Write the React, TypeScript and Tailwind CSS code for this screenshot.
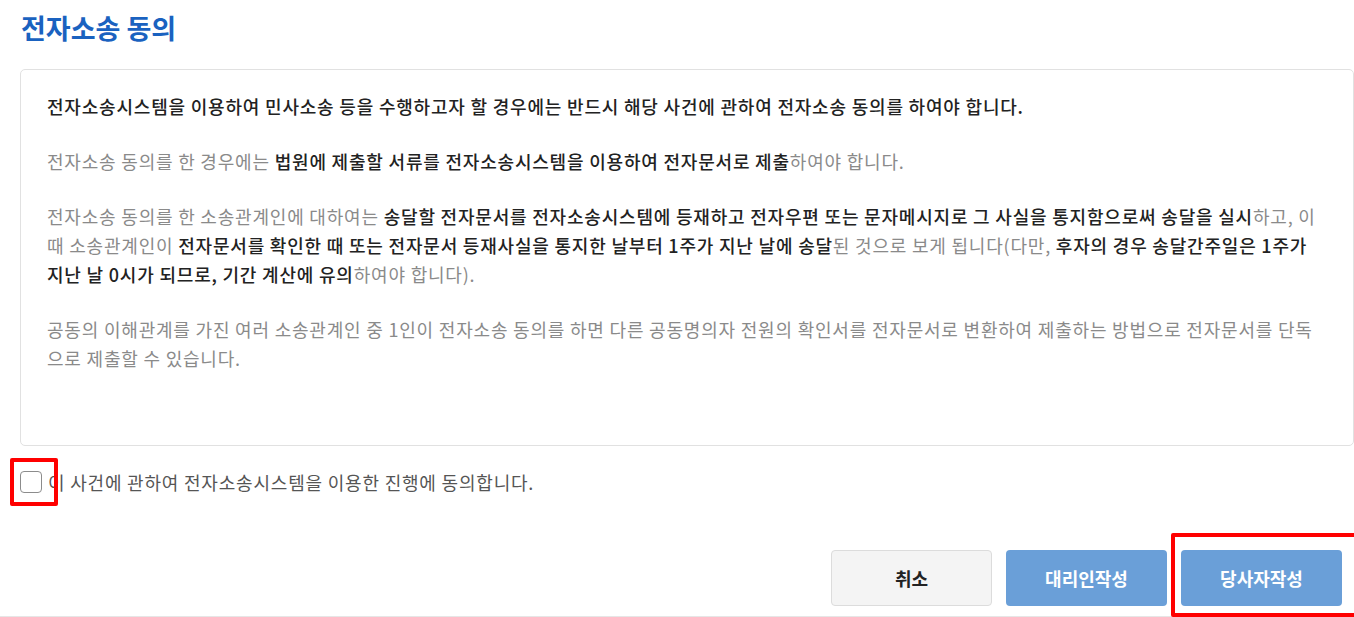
import React, { useState } from "react";

const B = ({ children }: { children: React.ReactNode }) => (
  <span className="text-[#222] font-medium">{children}</span>
);

export default function App() {
  const [agreed, setAgreed] = useState(false);

  return (
    <div className="w-[1354px] h-[617px] bg-white overflow-hidden font-['Noto_Sans_CJK_KR',sans-serif]">
      {/* Title */}
      <h2 className="pl-[21px] pt-[11px] text-[27px] leading-[34px] font-bold text-[#1a62c0]">
        전자소송 동의
      </h2>

      {/* Notice box */}
      <div className="ml-[20px] mt-[24px] h-[377px] border border-[#e1e1e1] rounded-[5px] pl-[26px] pr-[26px] pt-[22px] text-[18px] leading-[29px] tracking-[0.8px] text-[#8a8a8a]">
        <p>
          <B>
            전자소송시스템을 이용하여 민사소송 등을 수행하고자 할 경우에는 반드시 해당 사건에 관하여 전자소송 동의를 하여야
            합니다.
          </B>
        </p>
        <p className="mt-[26px]">
          전자소송 동의를 한 경우에는 <B>법원에 제출할 서류를 전자소송시스템을 이용하여 전자문서로 제출</B>하여야 합니다.
        </p>
        <p className="mt-[26px]">
          전자소송 동의를 한 소송관계인에 대하여는{" "}
          <B>송달할 전자문서를 전자소송시스템에 등재하고 전자우편 또는 문자메시지로 그 사실을 통지함으로써 송달을 실시</B>
          하고, 이 때 소송관계인이{" "}
          <B>전자문서를 확인한 때 또는 전자문서 등재사실을 통지한 날부터 1주가 지난 날에 송달</B>된 것으로 보게
          됩니다(다만, <B>후자의 경우 송달간주일은 1주가 지난 날 0시가 되므로, 기간 계산에 유의</B>하여야 합니다).
        </p>
        <p className="mt-[26px]">
          공동의 이해관계를 가진 여러 소송관계인 중 1인이 전자소송 동의를 하면 다른 공동명의자 전원의 확인서를
          전자문서로 변환하여 제출하는 방법으로 전자문서를 단독으로 제출할 수 있습니다.
        </p>
      </div>

      {/* Agreement checkbox */}
      <label className="mt-[24px] ml-[20px] flex items-center gap-[6px] h-[24px] cursor-pointer">
        <span className="relative flex">
          <input
            type="checkbox"
            checked={agreed}
            onChange={() => setAgreed(!agreed)}
            className="appearance-none w-[22px] h-[22px] border-[1.5px] border-[#8c8c8c] rounded-[4px] bg-white checked:bg-[#6a9fd8] checked:border-[#6a9fd8]"
          />
          <span className="pointer-events-none absolute -left-[10px] -top-[13px] w-[48px] h-[48px] border-[4px] border-[#ff0000] rounded-[2px]" />
        </span>
        <span className="text-[18px] tracking-[0.8px] text-[#555]">
          이 사건에 관하여 전자소송시스템을 이용한 진행에 동의합니다.
        </span>
      </label>

      {/* Buttons */}
      <div className="mt-[56px] pr-[12px] pb-[10px] flex justify-end gap-[14px] border-b border-[#e6e6e6]">
        <button className="w-[161px] h-[56px] rounded-[4px] border border-[#dcdcdc] bg-[#f4f4f4] text-[18px] font-bold text-[#222]">
          취소
        </button>
        <button className="w-[161px] h-[56px] rounded-[4px] bg-[#6a9fd8] text-[18px] font-bold text-white">
          대리인작성
        </button>
        <span className="relative flex">
          <button className="w-[161px] h-[56px] rounded-[4px] bg-[#6a9fd8] text-[18px] font-bold text-white">
            당사자작성
          </button>
          <span className="pointer-events-none absolute -left-[10px] -top-[17px] w-[190px] h-[84px] border-[4px] border-[#ff0000] rounded-[2px]" />
        </span>
      </div>
    </div>
  );
}
